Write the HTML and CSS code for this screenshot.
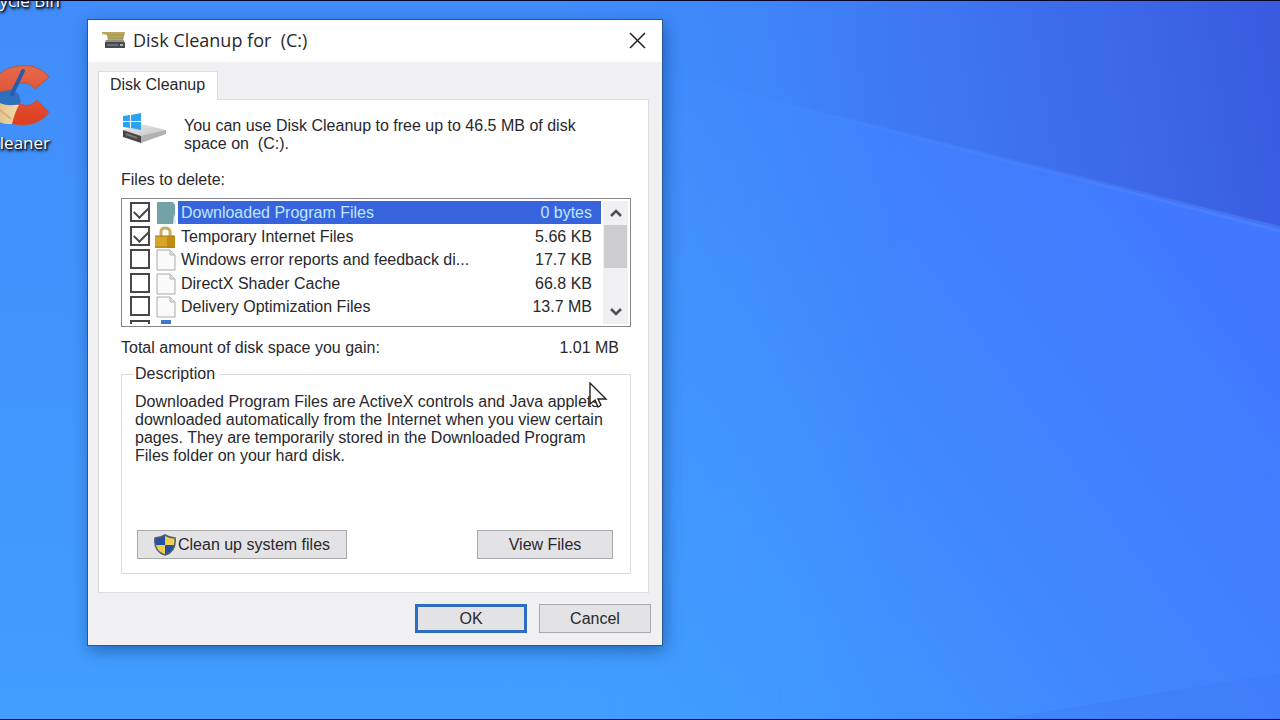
FILE: index.html
```html
<!DOCTYPE html>
<html lang="en">
<head>
<meta charset="utf-8">
<title>Disk Cleanup</title>
<link rel="stylesheet" href="styles.css">
</head>
<body>
<main class="desktop">
  <svg class="wallpaper" viewBox="0 0 1280 720" preserveAspectRatio="none" aria-hidden="true">
    <defs>
      <linearGradient id="base" gradientUnits="userSpaceOnUse" x1="600" y1="740" x2="1240" y2="280">
        <stop offset="0" stop-color="#419dff"/><stop offset=".3" stop-color="#4094ff"/><stop offset=".6" stop-color="#4086fc"/><stop offset="1" stop-color="#4278ff"/>
      </linearGradient>
      <linearGradient id="upper" gradientUnits="userSpaceOnUse" x1="640" y1="100" x2="1280" y2="0">
        <stop offset="0" stop-color="#3f88fb"/><stop offset=".5" stop-color="#3e75f0"/><stop offset="1" stop-color="#395bdf"/>
      </linearGradient>
      <linearGradient id="beam" gradientUnits="userSpaceOnUse" x1="680" y1="0" x2="1280" y2="0">
        <stop offset="0" stop-color="#5290ff" stop-opacity="0"/><stop offset="1" stop-color="#5288ff" stop-opacity=".5"/>
      </linearGradient>
      <linearGradient id="left" x1="0" y1="0" x2="0" y2="1">
        <stop offset="0" stop-color="#408cfb"/><stop offset="1" stop-color="#429eff"/>
      </linearGradient>
      <linearGradient id="fade" gradientUnits="userSpaceOnUse" x1="560" y1="0" x2="900" y2="0">
        <stop offset="0" stop-color="#fff"/><stop offset="1" stop-color="#000"/>
      </linearGradient>
      <mask id="leftmask"><rect width="1280" height="720" fill="url(#fade)"/></mask>
    </defs>
    <rect width="1280" height="720" fill="url(#base)"/>
    <path d="M500 0H1280V229L690 78L500 30Z" fill="url(#upper)"/>
    <rect width="1280" height="720" fill="url(#left)" mask="url(#leftmask)"/>
    <path d="M690 77L1280 226V232L690 80Z" fill="url(#beam)"/>
    <path d="M1000 720L1280 674V720Z" fill="#3f79f0" opacity=".35"/>
  </svg>

  <div class="shortcut recycle"><span>Recycle Bin</span></div>
  <div class="shortcut ccleaner">
    <svg width="88" height="64" viewBox="0 0 88 64" aria-hidden="true">
      <defs>
        <linearGradient id="cred" x1="0" y1="0" x2="0" y2="1">
          <stop offset="0" stop-color="#e4694c"/><stop offset="1" stop-color="#df3d20"/>
        </linearGradient>
        <linearGradient id="straw" x1="0" y1="0" x2="1" y2="0">
          <stop offset="0" stop-color="#d9b684"/><stop offset="1" stop-color="#f4dca8"/>
        </linearGradient>
      </defs>
      <path d="M87 14C79 5 69 1 57 3C39 5 29 16 29 32C29 50 42 62 61 62C71 62 82 57 87 49L75 37C71 42 66 43 61 42C52 41 48 37 48 31C49 24 53 20 59 20C64 19 69 21 73 26Z" fill="url(#cred)" stroke="#b9543c"/>
      <path d="M30 38L57 42C53 49 52 54 50 61C39 62 31 56 27 50Z" fill="url(#straw)"/>
      <path d="M38 47L49 56" stroke="#d4b17c" stroke-width="2"/>
      <path d="M35 29L48 27L57 31L59 40C50 44 40 42 33 38Z" fill="#2e70bd"/>
      <path d="M50 31L61 8" stroke="#285ca8" stroke-width="4" stroke-linecap="round"/>
    </svg>
    <span>CCleaner</span>
  </div>

  <section class="window" aria-labelledby="window-title">
    <header class="titlebar">
      <svg width="25" height="18" viewBox="0 0 25 18" aria-hidden="true">
        <path d="M1 1H24L22 10H7L6 4L1 3Z" fill="#b9a85e"/>
        <path d="M6 4H23M7 7H22" stroke="#a3934c"/>
        <path d="M5 9H22L24 12V17H4V12Z" fill="#4a4a4e"/>
        <path d="M5 9H22L23 11H5Z" fill="#8f8f90"/>
        <path d="M6 14H17" stroke="#8e9194" stroke-width="1"/><path d="M19 14H22" stroke="#a5b5a9" stroke-width="2"/>
      </svg>
      <h1 id="window-title">Disk Cleanup for&nbsp; (C:)</h1>
      <button class="close" aria-label="Close">
        <svg width="18" height="18" viewBox="0 0 18 18" aria-hidden="true"><path d="M1 2L16 17M16 2L1 17" stroke="#222" stroke-width="1.5"/></svg>
      </button>
    </header>

    <div class="body">
      <div class="tabs" role="tablist"><button class="tab" role="tab" aria-selected="true">Disk Cleanup</button></div>
      <div class="panel" role="tabpanel">
        <div class="intro">
          <svg width="46" height="32" viewBox="0 0 46 32" aria-hidden="true">
            <defs><linearGradient id="drive" x1="0" y1="0" x2="1" y2="1"><stop offset="0" stop-color="#e9e9e9"/><stop offset="1" stop-color="#c4c4c6"/></linearGradient></defs>
            <path d="M2 17L20 11L45 17L20 24Z" fill="url(#drive)"/>
            <path d="M2 17L20 23V30L2 24Z" fill="#4a4546"/>
            <path d="M20 23L45 17V21L20 30Z" fill="#b1b1b3"/>
            <path d="M5 21L16 25" stroke="#7b7878" stroke-width="2"/>
            <path d="M2 3L9 2V8H2ZM10 2L20 0V8H10ZM2 9H9V15L2 14ZM10 9H20V17L10 15Z" fill="#2ba3f0"/>
          </svg>
          <p>You can use Disk Cleanup to free up to 46.5 MB of disk<br>space on&nbsp; (C:).</p>
        </div>

        <h2 class="caption" id="files">Files to delete:</h2>
        <div class="listbox">
          <ul class="files" aria-labelledby="files">
            <li><label class="row selected"><input type="checkbox" checked>
              <svg width="22" height="22" viewBox="0 0 22 22" aria-hidden="true"><path d="M2 0H18L20 3V22H2Z" fill="#74a2a9"/><path d="M19 12L21 19V22H18Z" fill="#dcefee"/></svg>
              <span class="name">Downloaded Program Files</span><span class="size">0 bytes</span></label></li>
            <li><label class="row"><input type="checkbox" checked>
              <svg width="22" height="22" viewBox="0 0 22 22" aria-hidden="true"><path d="M6 10V6Q6 2 10 2Q15 2 15 6V10" fill="none" stroke="#c9ad62" stroke-width="3"/><path d="M0 10H20V22H0Z" fill="#d9a527"/><path d="M12 10H20V22H12Z" fill="#c28c14"/><path d="M0 10H20M0 21H20" stroke="#a87816"/></svg>
              <span class="name">Temporary Internet Files</span><span class="size">5.66 KB</span></label></li>
            <li><label class="row"><input type="checkbox">
              <svg width="22" height="22" viewBox="0 0 22 22" aria-hidden="true"><path d="M2 1H15L20 6V21H2Z" fill="#fafafa" stroke="#a8a8aa"/><path d="M15 1V6H20" fill="#ddd" stroke="#b4b4b6"/></svg>
              <span class="name">Windows error reports and feedback di...</span><span class="size">17.7 KB</span></label></li>
            <li><label class="row"><input type="checkbox">
              <svg width="22" height="22" viewBox="0 0 22 22" aria-hidden="true"><path d="M2 1H15L20 6V21H2Z" fill="#fafafa" stroke="#a8a8aa"/><path d="M15 1V6H20" fill="#ddd" stroke="#b4b4b6"/></svg>
              <span class="name">DirectX Shader Cache</span><span class="size">66.8 KB</span></label></li>
            <li><label class="row"><input type="checkbox">
              <svg width="22" height="22" viewBox="0 0 22 22" aria-hidden="true"><path d="M2 1H15L20 6V21H2Z" fill="#fafafa" stroke="#a8a8aa"/><path d="M15 1V6H20" fill="#ddd" stroke="#b4b4b6"/></svg>
              <span class="name">Delivery Optimization Files</span><span class="size">13.7 MB</span></label></li>
            <li><label class="row"><input type="checkbox" aria-label="More files">
              <svg width="22" height="22" viewBox="0 0 22 22" aria-hidden="true"><path d="M6 0H16V12H6Z" fill="#3f78d4"/></svg></label></li>
          </ul>
          <div class="scrollbar">
            <button aria-label="Scroll up"><svg width="12" height="8" viewBox="0 0 12 8" aria-hidden="true"><path d="M1 7L6 2L11 7" fill="none" stroke="#505052" stroke-width="2.6"/></svg></button>
            <div class="thumb"></div>
            <button aria-label="Scroll down"><svg width="12" height="8" viewBox="0 0 12 8" aria-hidden="true"><path d="M1 1L6 6L11 1" fill="none" stroke="#505052" stroke-width="2.6"/></svg></button>
          </div>
        </div>

        <div class="total"><span>Total amount of disk space you gain:</span><span>1.01 MB</span></div>

        <fieldset class="group">
          <legend>Description</legend>
          <p>Downloaded Program Files are ActiveX controls and Java applets<br>downloaded automatically from the Internet when you view certain<br>pages. They are temporarily stored in the Downloaded Program<br>Files folder on your hard disk.</p>
          <div class="actions">
            <button class="btn system">
              <svg width="22" height="22" viewBox="0 0 22 22" aria-hidden="true">
                <path d="M11 1C8 3 4 4 1 4C0 13 4 19 11 21C18 19 22 13 21 4C18 4 14 3 11 1Z" fill="#f3ce4c"/>
                <path d="M11 1C8 3 4 4 1 4V11H11ZM11 11H21C20 16 16 20 11 21Z" fill="#264fa8"/>
                <path d="M11 1C8 3 4 4 1 4C0 13 4 19 11 21C18 19 22 13 21 4C18 4 14 3 11 1Z" fill="none" stroke="#52616c" stroke-width="1.6"/>
              </svg>Clean up system files</button>
            <button class="btn view">View Files</button>
          </div>
        </fieldset>
      </div>
      <footer class="footer">
        <button class="btn ok">OK</button>
        <button class="btn cancel">Cancel</button>
      </footer>
    </div>
  </section>

  <svg class="pointer" width="20" height="28" viewBox="0 0 20 28" aria-hidden="true"><path d="M2 1V22L7 18L10 25L13 23L10 17H18Z" fill="#fff" stroke="#222" stroke-width="1.4"/></svg>
</main>
</body>
</html>
```
FILE: styles.css
```css
* { box-sizing: border-box; }
body { margin: 0; font: 16px/18px "Liberation Sans", Arial, sans-serif; color: #29282c; }
h1, h2, p, ul { margin: 0; padding: 0; font-weight: normal; }
button { font: inherit; color: inherit; padding: 0; border: 0; }
svg { display: block; flex: none; }

.desktop { position: relative; height: 100vh; overflow: hidden; border-top: 1px solid #05082c; border-bottom: 1px solid #05082c; background: #408ffb; }
.wallpaper { position: absolute; inset: 0; width: 100%; height: 100%; }

.shortcut { position: absolute; left: -38px; width: 88px; text-align: right; color: #fff; font: 500 17px/20px "Open Sans", sans-serif; text-shadow: 1px 1px 2px #000, 1px 2px 3px #000; white-space: nowrap; }
.recycle { top: -10px; width: 98px; }
.ccleaner { top: 62px; }
.ccleaner span { display: block; margin-top: 6px; }

.window { position: absolute; left: 88px; top: 19px; width: 574px; background: #f0eff1; outline: 1px solid #28588f; box-shadow: 2px 5px 16px rgba(0, 30, 80, .45); }
.titlebar { display: flex; align-items: center; height: 42px; padding: 0 15px 2px 13px; background: #fff; }
.titlebar h1 { flex: 1; margin-left: 7px; font: 18px/24px "Open Sans", sans-serif; }
.close { background: none; }

.body { padding: 9px 13px 12px 10px; }
.tabs { display: flex; }
.tab { position: relative; height: 29px; padding: 0 12px 2px 11px; background: #fff; border: 1px solid #dcdbdd; border-bottom: 0; margin-bottom: -1px; z-index: 1; }
.panel { padding: 13px 17px 18px 22px; background: #fff; border: 1px solid #dcdbdd; }
.intro { display: flex; gap: 17px; }
.intro p { padding-top: 4px; }
.caption { margin-top: 18px; font-size: 16px; line-height: 18px; }

.listbox { display: flex; height: 129px; margin-top: 9px; padding: 2px; border: 1px solid #85868a; }
.files { flex: 1; display: grid; grid-auto-rows: 24px 23px; overflow: hidden; list-style: none; }
.row { display: flex; align-items: center; height: 23px; padding-left: 6px; }
.row input { appearance: none; flex: none; width: 20px; height: 20px; margin: 0 5px 2px 0; border: 2px solid #474649; background: #fff; }
.row input:checked::after { content: ""; display: block; width: 13px; height: 7px; margin: 2px 0 0 2px; border: solid #474649; border-width: 0 0 2px 2px; transform: rotate(-45deg); }
.name { flex: 1; margin-left: 1px; padding-left: 3px; white-space: nowrap; }
.size { padding-right: 9px; }
.name, .size { line-height: 23px; }
.selected .name, .selected .size { background: #3764dc; color: #bfe6ff; }
.scrollbar { display: flex; flex-direction: column; width: 25px; margin-left: 2px; background: #f0eff1; }
.scrollbar button { display: grid; place-items: center; height: 24px; background: none; }
.thumb { height: 43px; margin: 0 1px; background: #cdccce; }
.scrollbar button:last-child { margin-top: auto; }

.total { display: flex; justify-content: space-between; margin-top: 12px; padding-right: 12px; }
.group { margin: 8px 0 0; padding: 10px 17px 14px 13px; border: 1px solid #dcdbdd; }
.group legend { padding: 0 4px 0 1px; margin-left: -1px; }
.group p { min-height: 137px; white-space: nowrap; }
.actions { display: flex; justify-content: space-between; padding-left: 2px; }
.btn { display: flex; align-items: center; justify-content: center; height: 29px; background: #e3e2e4; border: 1px solid #a9a8ab; }
.system { width: 210px; gap: 2px; }
.view { width: 136px; }
.footer { display: flex; justify-content: flex-end; gap: 12px; margin: 11px -2px 0 0; }
.ok, .cancel { width: 112px; }
.ok { border: 3px solid #2f6cc4; }

.pointer { position: absolute; left: 588px; top: 381px; }
```
